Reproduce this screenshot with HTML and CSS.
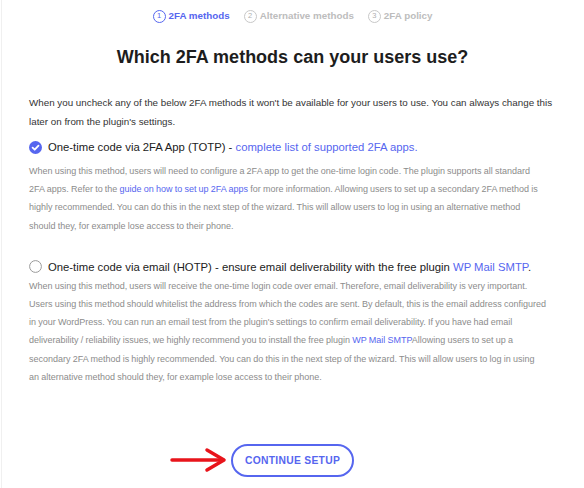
FILE: index.html
```html
<!DOCTYPE html>
<html lang="en">
<head>
  <meta charset="UTF-8">
  <meta name="viewport" content="width=device-width, initial-scale=1.0">
  <title>2FA wizard</title>
  <link rel="stylesheet" href="styles.css">
</head>
<body>
  <div class="wizard">
    <!-- steps -->
    <ul class="steps">
      <li class="step active"><span class="num">1</span>2FA methods</li>
      <li class="step"><span class="num">2</span>Alternative methods</li>
      <li class="step"><span class="num">3</span>2FA policy</li>
    </ul>

    <h1>Which 2FA methods can your users use?</h1>

    <p class="intro">When you uncheck any of the below 2FA methods it won't be available for your users to use. You can always change this later on from the plugin's settings.</p>

    <div class="method">
      <label class="method-title">
        <svg class="icon" width="13" height="13" viewBox="0 0 13 13">
          <circle cx="6.5" cy="6.5" r="6.5" fill="#5666ef"/>
          <path d="M3.6 6.7 L5.7 8.7 L9.5 4.6" fill="none" stroke="#fff" stroke-width="1.8" stroke-linecap="round" stroke-linejoin="round"/>
        </svg>
        <span>One-time code via 2FA App (TOTP) - <a href="#">complete list of supported 2FA apps.</a></span>
      </label>
      <p class="desc">When using this method, users will need to configure a 2FA app to get the one-time login code. The plugin supports all standard<br>
        2FA apps. Refer to the <a href="#">guide on how to set up 2FA apps</a> for more information. Allowing users to set up a secondary 2FA method is<br>
        highly recommended. You can do this in the next step of the wizard. This will allow users to log in using an alternative method<br>
        should they, for example lose access to their phone.</p>
    </div>

    <div class="method">
      <label class="method-title">
        <svg class="icon" width="13" height="13" viewBox="0 0 13 13">
          <circle cx="6.5" cy="6.5" r="5.9" fill="#fff" stroke="#9a9a9a" stroke-width="1"/>
        </svg>
        <span>One-time code via email (HOTP) - ensure email deliverability with the free plugin <a href="#">WP Mail SMTP</a>.</span>
      </label>
      <p class="desc">When using this method, users will receive the one-time login code over email. Therefore, email deliverability is very important.<br>
        Users using this method should whitelist the address from which the codes are sent. By default, this is the email address configured<br>
        in your WordPress. You can run an email test from the plugin's settings to confirm email deliverability. If you have had email<br>
        deliverability / reliability issues, we highly recommend you to install the free plugin <a href="#">WP Mail SMTP</a>Allowing users to set up a<br>
        secondary 2FA method is highly recommended. You can do this in the next step of the wizard. This will allow users to log in using<br>
        an alternative method should they, for example lose access to their phone.</p>
    </div>

    <div class="actions">
      <div class="btn-wrap">
        <svg class="arrow" width="58" height="26" viewBox="0 0 58 26">
          <path d="M2 13 H53" stroke="#e8141b" stroke-width="3.5" stroke-linecap="round"/>
          <path d="M37 3 L54 13 L37 23" fill="none" stroke="#e8141b" stroke-width="3.5" stroke-linecap="round" stroke-linejoin="round"/>
        </svg>
        <button class="btn">Continue Setup</button>
      </div>
    </div>
  </div>
</body>
</html>
```

FILE: styles.css
```css
body {
  margin: 0;
  background: #fff;
  font-family: "Liberation Sans", Arial, sans-serif;
  color: #2b2b2b;
}

.wizard {
  border-left: 1px solid #f0f0f0;
  margin-left: 1px;
  padding: 8px 14px 0 27px;
  min-height: 480px;
}

.steps {
  list-style: none;
  margin: 0 0 0 -14px;
  padding: 0;
  display: flex;
  justify-content: center;
  gap: 14px;
}

.step {
  display: flex;
  align-items: center;
  gap: 3px;
  font-size: 9.8px;
  font-weight: bold;
  color: #bdbdbd;
  line-height: 16px;
}

.num {
  width: 11px;
  height: 11px;
  border: 1px solid #c8c8c8;
  border-radius: 50%;
  font-size: 7.5px;
  font-weight: normal;
  display: flex;
  align-items: center;
  justify-content: center;
  color: #b0b0b0;
}

.step.active {
  color: #5666ef;
}

.step.active .num {
  border-color: #5666ef;
  color: #5666ef;
}

h1 {
  font-size: 18px;
  text-align: center;
  margin: 21px 0 24px -14px;
  color: #1d1d1d;
  line-height: 24px;
}

a {
  color: #5666ef;
  text-decoration: none;
}

.intro {
  font-size: 9.8px;
  line-height: 19px;
  margin: 0 0 7px;
  color: #333;
  max-width: 535px;
}

.method-title {
  display: flex;
  align-items: center;
  gap: 6px;
  font-size: 11.3px;
  line-height: 18px;
  color: #222;
  white-space: nowrap;
}

.icon {
  flex-shrink: 0;
}

.desc {
  font-size: 9px;
  word-spacing: -0.3px;
  line-height: 18.2px;
  color: #8c8c8c;
  margin: 6px 0 0;
  white-space: nowrap;
}

.method + .method {
  margin-top: 23px;
}

.method + .method .desc {
  margin-top: 1px;
}

.actions {
  display: flex;
  justify-content: center;
  margin: 58px 0 0 -14px;
}

.btn-wrap {
  position: relative;
}

.arrow {
  position: absolute;
  right: 100%;
  top: 3px;
  margin-right: 3px;
}

.btn {
  display: block;
  font-family: "Liberation Sans", Arial, sans-serif;
  font-size: 10.3px;
  font-weight: bold;
  text-transform: uppercase;
  letter-spacing: 0.3px;
  color: #5666ef;
  background: #fff;
  border: 2px solid #5666ef;
  border-radius: 18px;
  width: 123px;
  height: 33px;
  padding: 0;
}
```
